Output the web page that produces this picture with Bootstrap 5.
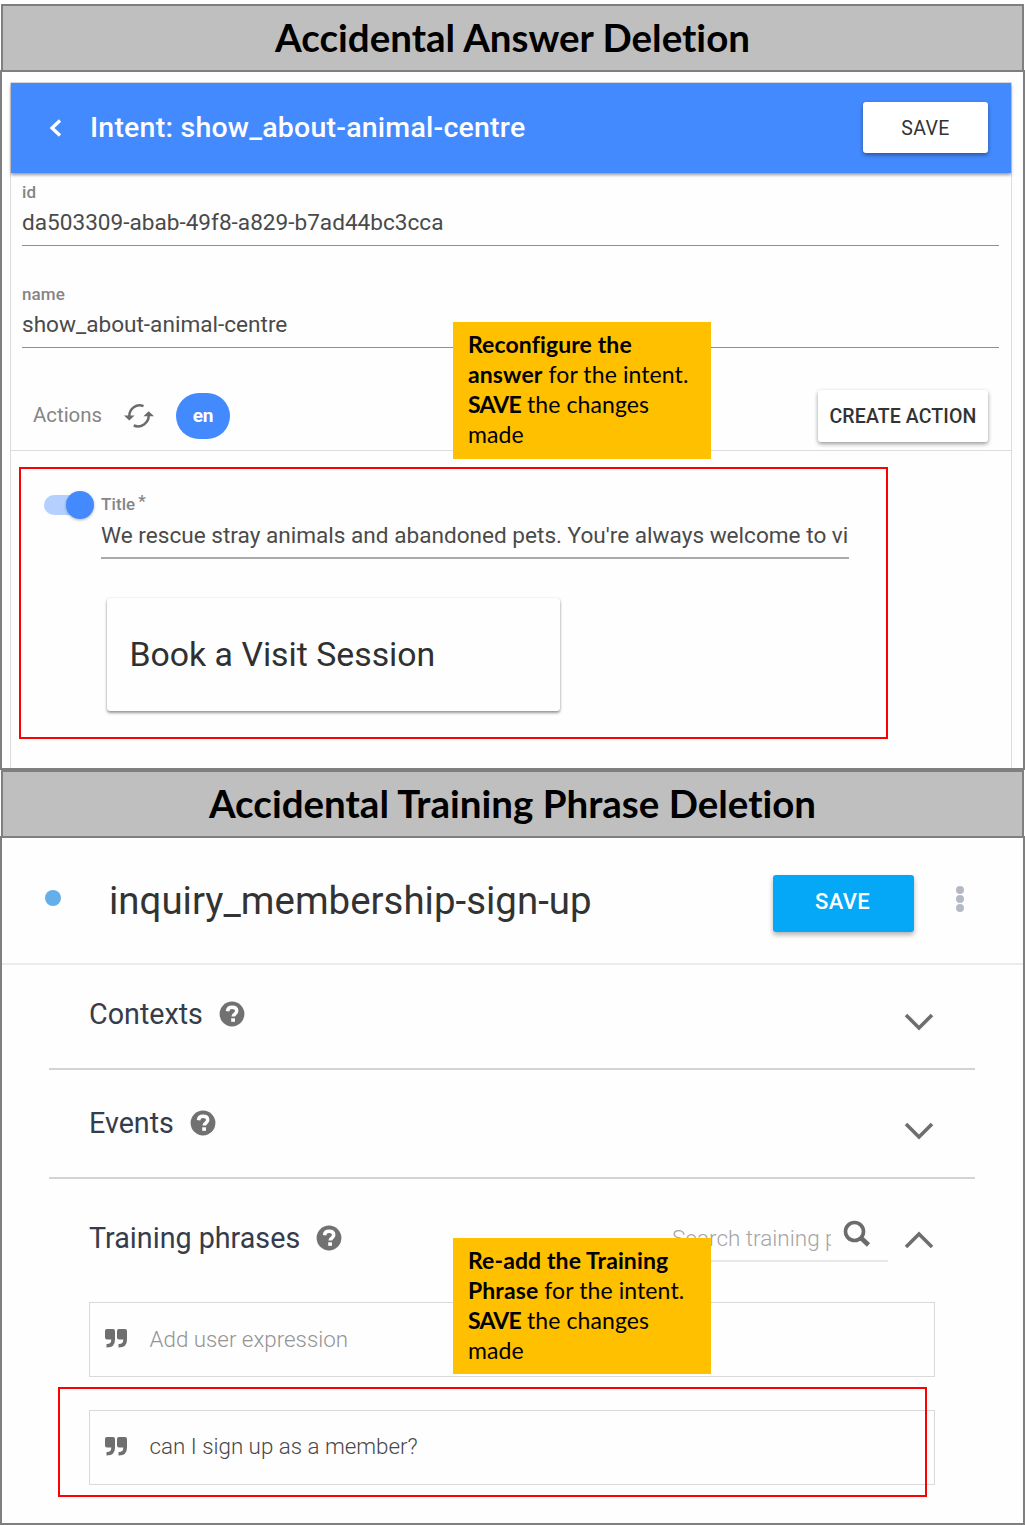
<!DOCTYPE html>
<html lang="en">
<head>
<meta charset="utf-8">
<meta name="viewport" content="width=device-width, initial-scale=1">
<title>Recovering from accidental deletion</title>
<link href="https://cdn.jsdelivr.net/npm/bootstrap@5.3.0/dist/css/bootstrap.min.css" rel="stylesheet">
<style>
  body { width: 1025px; height: 1525px; overflow: hidden; background: #fff; font-family: Roboto, "Liberation Sans", sans-serif; }
  svg { display: block; flex: none; }
  .banner { margin: 0 1px; height: 68px; border: 2px solid #7f7f7f; background: #bfbfbf; color: #000; font: 700 38.5px/62px Lato, sans-serif; font-variant-ligatures: none; text-align: center; }
  .banner-second { position: relative; }
  .panel { border: 2px solid #7f7f7f; background: #fefefe; }
  .panel-answer { height: 700px; margin-top: -2px; padding: 10px 12px 0 8px; }
  .panel-phrase { height: 689px; margin-top: -2px; }
  .callout { position: absolute; z-index: 5; width: 258px; padding: 7px 10px 8px 15px; background: #ffc000; color: #000; font: 400 23px/30px Lato, sans-serif; letter-spacing: .1px; white-space: nowrap; }
  .callout b { font-weight: 700; }
  .callout-answer { left: 451px; top: 250px; height: 137px; }
  .callout-phrase { left: 451px; top: 400px; height: 136px; }
  .shout { letter-spacing: -.8px; }

  .console { width: 1002px; height: 686px; border: 1px solid #dcdcdc; border-bottom: 0; background: #fefefe; }
  .console-bar { height: 90px; background: #448aff; color: #fff; box-shadow: 0 2px 3px rgba(0,0,0,.4); padding: 0 23px 1px 38px; }
  .console-title { font-size: 28.5px; font-weight: 500; line-height: 36px; letter-spacing: .23px; margin-left: 28px; }
  .raised { background: #fff; border: 0; border-radius: 3px; color: #333; font-size: 19.500px; line-height: 24px; padding: 0; box-shadow: 0 2px 4px rgba(0,0,0,.4); }
  .raised-save { width: 125px; height: 51px; letter-spacing: .4px; padding-top: 2px; }
  .raised-create { width: 170px; height: 52px; font-weight: 500; letter-spacing: .12px; padding-top: 1px; }
  .entry { margin: 0 12px 0 11px; border-bottom: 1px solid #8f8f8f; }
  .entry-id { height: 73px; padding-top: 7px; }
  .entry-name { height: 102px; padding-top: 36px; }
  .caption { font-size: 17px; line-height: 24px; font-weight: 500; color: #858585; letter-spacing: .1px; }
  .value { font-size: 22.600px; line-height: 30px; color: #4a4a4a; white-space: nowrap; overflow: hidden; }
  .entry .value { margin-top: 4px; }
  .actions { height: 103px; padding: 34px 23px 0 22px; border-bottom: 1px solid #ddd; }
  .actions-label { font-size: 20.400px; line-height: 26px; color: #858585; width: 91px; padding-bottom: 2px; }
  .lang { width: 54px; height: 46px; border-radius: 23px; background: #448aff; color: #fff; font-size: 19px; font-weight: 700; line-height: 45px; text-align: center; letter-spacing: -.2px; margin-left: 22px; }
  .outlined { width: 869px; height: 272px; margin: 16px 0 0 8px; border: 2px solid #f00; padding: 22px 0 0 23px; }
  .toggle { width: 50px; height: 28px; }
  .toggle-track { width: 36px; height: 20px; border-radius: 10px 0 0 10px; background: #b4d0ff; }
  .toggle-knob { width: 28px; height: 28px; border-radius: 50%; background: #448aff; box-shadow: 0 1px 3px rgba(0,0,0,.3); margin-left: -14px; }
  .title-entry { width: 748px; height: 68px; padding-top: 1px; margin-left: 7px; border-bottom: 2px solid #aaa; }
  .title-entry .value { margin-top: 5px; }
  .star { font-size: 17px; line-height: 10px; vertical-align: 3px; margin-left: 3px; }
  .reply-card { width: 453px; height: 113px; margin: 39px 0 0 62.5px; padding: 0 23px; border-radius: 3px; background: #fefefe; color: #303030; box-shadow: 0 2px 3px rgba(0,0,0,.4), 0 0 2px rgba(0,0,0,.12); font-size: 33.800px; line-height: 40px; }

  .intent-head { height: 127px; padding: 0 58px 0 43px; border-bottom: 2px solid #ebebeb; }
  .status-dot { width: 16px; height: 16px; border-radius: 50%; background: #64aeea; margin-bottom: 6px; }
  .intent-name { font-size: 38.400px; line-height: 48px; color: #333; letter-spacing: .02px; margin-left: 48px; }
  .primary-save { width: 141px; height: 57px; border: 0; border-radius: 3px; background: #04a8f6; color: #fff; font-size: 22px; font-weight: 500; line-height: 28px; letter-spacing: .3px; padding: 0 2px 2px 0; margin: 5px 41px 0 auto; box-shadow: 0 3px 5px rgba(0,0,0,.3); }
  .more { margin-bottom: 4px; }
  .section-line { margin: 0 48px 0 46.5px; padding: 0 41px 0 40.5px; border-bottom: 2px solid #d6d2d3; }
  .section-title { font-size: 28.700px; line-height: 36px; color: #353c4b; margin-right: 16px; }
  .sec-contexts { height: 105px; padding-bottom: 6px; }
  .sec-events { height: 109px; padding-bottom: 2px; }
  .sec-training { height: 123px; margin: 0 89px 0 87px; padding-bottom: 6px; }
  .search { width: 218px; height: 48px; border-bottom: 2px solid #e8e8e8; margin-right: 16px; }
  .search-hint { width: 159px; margin-left: 2px; padding-top: 3px; overflow: hidden; white-space: nowrap; font-size: 22.500px; font-weight: 300; line-height: 30px; color: #a5a5a5; }
  .search-icon { margin: 0 17px 5px auto; }
  .phrase { height: 75px; margin: 0 88px 0 86.5px; border: 1px solid #d9d9d9; padding: 0 0 2px 15px; font-size: 22.350px; line-height: 30px; font-weight: 300; color: #949494; }
  .phrase-gap { margin-right: 23px; }
  .phrase-filled { margin-top: 33px; padding-bottom: 3px; color: #484848; }
  .phrase-outline { position: absolute; left: 56px; top: 549px; width: 869px; height: 110px; border: 2px solid #f00; }
</style>
<script src="https://cdn.jsdelivr.net/npm/bootstrap@5.3.0/dist/js/bootstrap.bundle.min.js"></script>
</head>
<body>
<svg width="0" height="0" class="position-absolute" aria-hidden="true">
  <symbol id="help" viewBox="0 0 26 26"><circle cx="13" cy="13" r="12.4" fill="#717171"/><path d="M8.500 10.200C8.800 7.300 10.600 6.300 13 6.300c2.700 0 4.700 1.300 4.700 3.700 0 3.100-3.500 2.900-3.500 5.500" fill="none" stroke="#fff" stroke-width="3.500"/><path d="M12.200 17.300h3.800v3.500h-3.800z" fill="#fff"/></symbol>
  <symbol id="down" viewBox="0 0 30 18"><path d="M2 2l13 13L28 2" fill="none" stroke="#6e6e6e" stroke-width="3.600"/></symbol>
  <symbol id="quotes" viewBox="0 0 22 19"><path d="M1.800 0H8Q10 0 10 2v8.500Q10 18.500 2 18.500H1.500V15H2q4.300 0 4.300-4.600H2Q0 10.400 0 8.500V2Q0 0 1.800 0z" fill="#6f6f6f"/><path d="M13.800 0H20Q22 0 22 2v8.500Q22 18.500 14 18.500h-.500V15h.500q4.300 0 4.300-4.600H14q-2 0-2-1.900V2Q12 0 13.800 0z" fill="#6f6f6f"/></symbol>
</svg>

<main class="pt-1">
  <h1 class="banner">Accidental Answer Deletion</h1>
  <section class="panel panel-answer position-relative">
    <div class="console">
      <header class="console-bar d-flex align-items-center">
        <svg width="13" height="18" viewBox="0 0 13 18"><path d="M11 1.500L3 9l8 7.500" fill="none" stroke="#fff" stroke-width="3.300"/></svg>
        <div class="console-title">Intent: show_about-animal-centre</div>
        <button class="btn raised raised-save ms-auto">SAVE</button>
      </header>
      <div class="entry entry-id"><div class="caption">id</div><div class="value">da503309-abab-49f8-a829-b7ad44bc3cca</div></div>
      <div class="entry entry-name"><div class="caption">name</div><div class="value">show_about-animal-centre</div></div>
      <div class="actions d-flex align-items-center">
        <div class="actions-label">Actions</div>
        <svg width="30" height="26" viewBox="0 0 30 26"><g fill="none" stroke="#6b6b6b" stroke-width="2.500"><path d="M5.300 13C5.300 5.500 12.500 .3 19.500 3.200"/><path d="M24.700 12.500c0 7.500-7.500 13-15 10"/></g><path d="M0 12.500h10.600L5.300 17.500zM19.400 13.200L24.700 8.200 30 13.200z" fill="#6b6b6b"/></svg>
        <div class="lang">en</div>
        <button class="btn raised raised-create ms-auto">CREATE ACTION</button>
      </div>
      <div class="outlined">
        <div class="d-flex">
          <div class="toggle d-flex align-items-center"><div class="toggle-track"></div><div class="toggle-knob"></div></div>
          <div class="title-entry"><div class="caption">Title<span class="star">*</span></div><div class="value">We rescue stray animals and abandoned pets. You're always welcome to vi</div></div>
        </div>
        <div class="reply-card d-flex align-items-center">Book a Visit Session</div>
      </div>
    </div>
    <div class="callout callout-answer"><b>Reconfigure the</b><br><b>answer</b> for the intent.<br><b class="shout">SAVE</b> the changes<br>made</div>
  </section>

  <h1 class="banner banner-second">Accidental Training Phrase Deletion</h1>
  <section class="panel panel-phrase position-relative">
    <header class="intent-head d-flex align-items-center">
      <div class="status-dot"></div>
      <div class="intent-name">inquiry_membership-sign-up</div>
      <button class="btn primary-save">SAVE</button>
      <svg class="more" width="10" height="28" viewBox="0 0 10 28"><g fill="#b4b9c5"><circle cx="5" cy="5" r="4"/><circle cx="5" cy="14" r="4"/><circle cx="5" cy="23" r="4"/></g></svg>
    </header>
    <div class="section-line sec-contexts d-flex align-items-center">
      <div class="section-title">Contexts</div><svg width="26" height="26"><use href="#help"/></svg>
      <svg class="ms-auto mt-3" width="30" height="18"><use href="#down"/></svg>
    </div>
    <div class="section-line sec-events d-flex align-items-center">
      <div class="section-title">Events</div><svg width="26" height="26"><use href="#help"/></svg>
      <svg class="ms-auto mt-3" width="30" height="18"><use href="#down"/></svg>
    </div>
    <div class="sec-training d-flex align-items-center">
      <div class="section-title">Training phrases</div><svg width="26" height="26"><use href="#help"/></svg>
      <div class="search d-flex align-items-center ms-auto">
        <div class="search-hint">Search training phrases</div>
        <svg class="search-icon" width="28" height="28" viewBox="0 0 28 28"><circle cx="11.500" cy="11.500" r="9" fill="none" stroke="#6b6b6b" stroke-width="3.600"/><path d="M17.500 17.500l8 7.500" stroke="#6b6b6b" stroke-width="4.600"/></svg>
      </div>
      <svg class="mt-1" width="30" height="18" viewBox="0 0 30 18"><path d="M2 16L15 3l13 13" fill="none" stroke="#6e6e6e" stroke-width="3.600"/></svg>
    </div>
    <div class="phrase d-flex align-items-center"><svg class="phrase-gap" width="22" height="19"><use href="#quotes"/></svg>Add user expression</div>
    <div class="phrase phrase-filled d-flex align-items-center"><svg class="phrase-gap" width="22" height="19"><use href="#quotes"/></svg>can I sign up as a member?</div>
    <div class="phrase-outline"></div>
    <div class="callout callout-phrase"><b>Re-add the Training</b><br><b>Phrase</b> for the intent.<br><b class="shout">SAVE</b> the changes<br>made</div>
  </section>
</main>
</body>
</html>
